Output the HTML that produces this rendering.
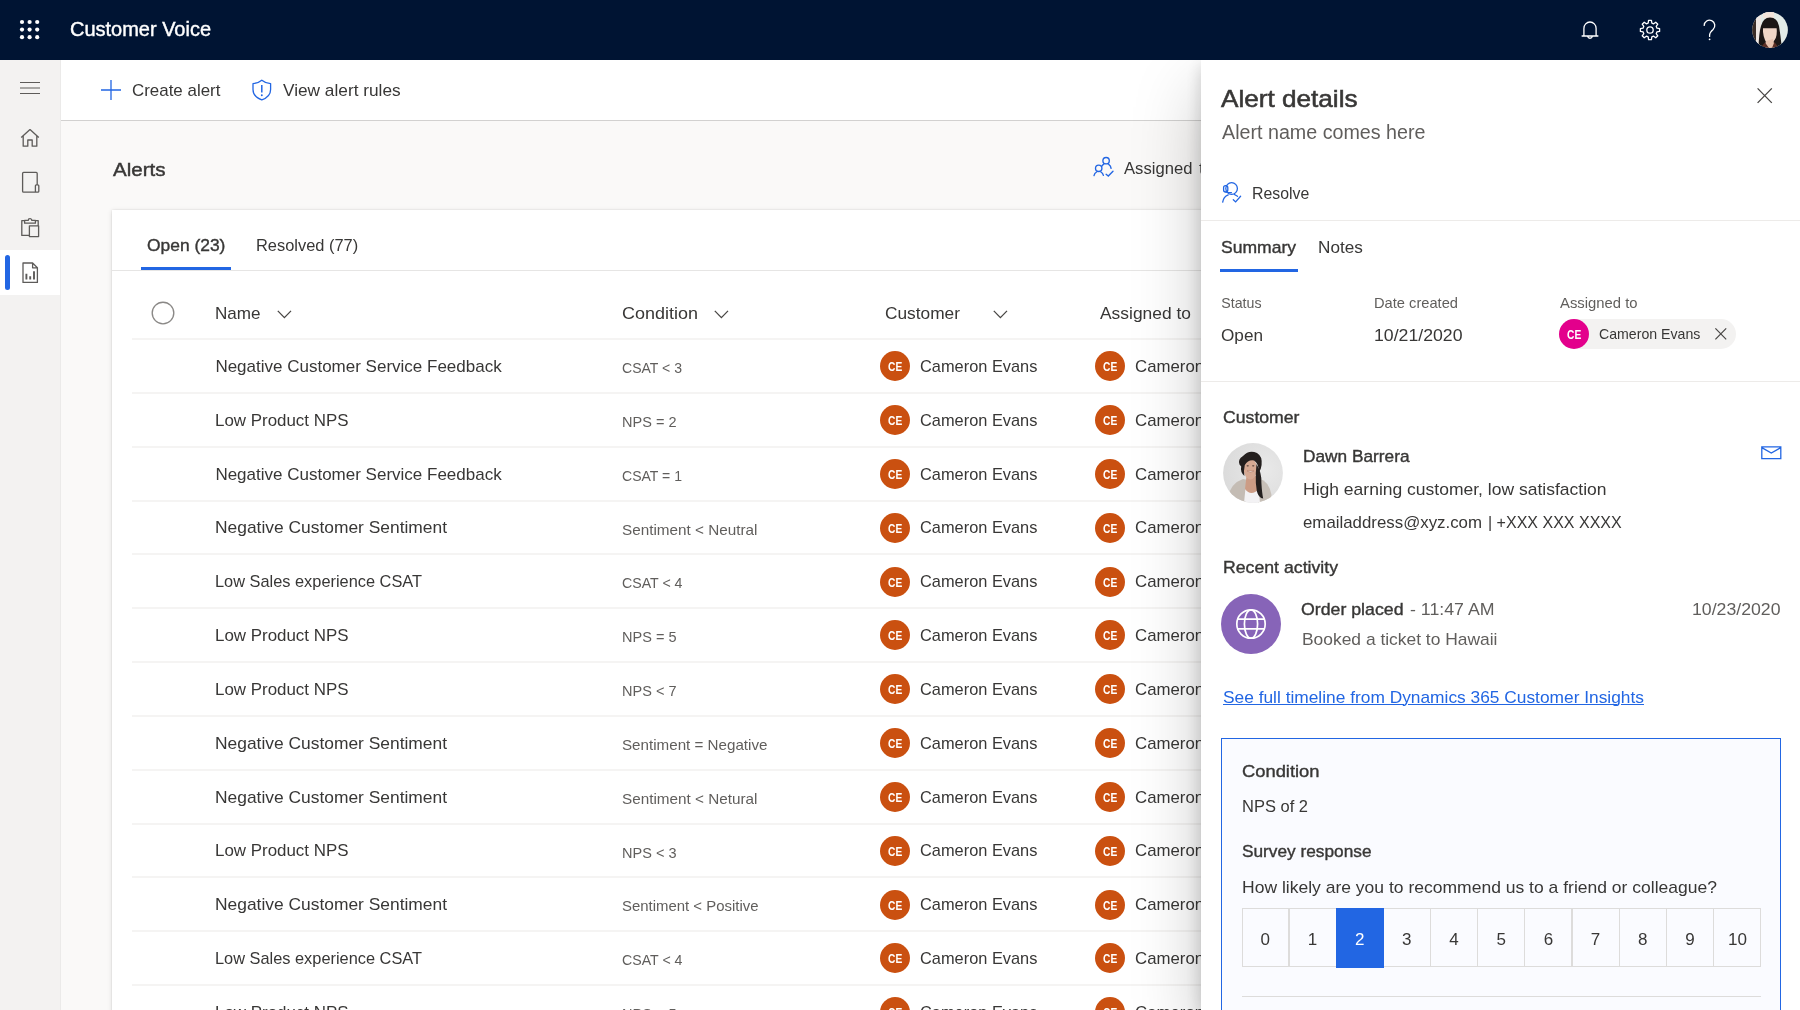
<!DOCTYPE html>
<html lang="en">
<head>
<meta charset="utf-8">
<title>Customer Voice - Alerts</title>
<style>
*{box-sizing:border-box;margin:0;padding:0}
html,body{width:1800px;height:1010px;overflow:hidden;background:#faf9f8;font-family:"Liberation Sans",sans-serif;color:#383736}
.t{position:absolute;white-space:pre;line-height:1;transform-origin:0 50%}
.a{position:absolute}
#root{position:absolute;left:0;top:0;width:1800px;height:1010px;overflow:hidden;will-change:transform}
#top{position:absolute;left:0;top:0;width:1800px;height:60px;background:#001433}
#side{position:absolute;left:0;top:60px;width:61px;height:950px;background:#f3f2f1;border-right:1px solid #ebeae9}
#sel{position:absolute;left:0;top:250px;width:60px;height:45px;background:#fff}
#selbar{position:absolute;left:5px;top:255px;width:5px;height:35px;border-radius:3px;background:#2266e3}
#cmd{position:absolute;left:61px;top:60px;width:1739px;height:61px;background:#fff;border-bottom:1px solid #d2d1d0}
#card{position:absolute;left:112px;top:210px;width:1700px;height:820px;background:#fff;box-shadow:0 1px 5px rgba(0,0,0,.13),0 0 2px rgba(0,0,0,.10)}
#tabline{position:absolute;left:112px;top:270px;width:1100px;height:1px;background:#e6e5e4}
#tabsel{position:absolute;left:141px;top:267px;width:90px;height:3px;background:#2266e3}
#panel{position:absolute;left:1201px;top:0;width:599px;height:950px;background:#fff;box-shadow:0 28.8px 64.8px rgba(0,0,0,.22),0 5.4px 16.2px rgba(0,0,0,.18)}
.sep{position:absolute;left:132px;width:1080px;height:2px;background:#f5f4f3}
.av{position:absolute;width:30px;height:30px;border-radius:50%;background:#ca5010}
.pl{position:absolute;left:1201px;width:599px;height:2px;background:#edebe9}
svg{position:absolute;overflow:visible}
</style>
</head>
<body><div id="root">
<div id="top"></div>
<svg width="60" height="60" style="left:0;top:0" fill="#fff"><circle cx="22.0" cy="22.0" r="2.1"/><circle cx="22.0" cy="29.6" r="2.1"/><circle cx="22.0" cy="37.2" r="2.1"/><circle cx="29.6" cy="22.0" r="2.1"/><circle cx="29.6" cy="29.6" r="2.1"/><circle cx="29.6" cy="37.2" r="2.1"/><circle cx="37.2" cy="22.0" r="2.1"/><circle cx="37.2" cy="29.6" r="2.1"/><circle cx="37.2" cy="37.2" r="2.1"/></svg>
<span class="t" style="left:70.40px;top:19.69px;font-size:19.5px;transform:scaleX(1.0243);color:#fff;-webkit-text-stroke:0.4px;">Customer Voice</span>
<svg width="240" height="60" style="left:1560px;top:0" fill="none" stroke="#fff" stroke-width="1.3" stroke-linejoin="round" stroke-linecap="round">
<path d="M23.9 36 V28.4 a6.1 6.4 0 0 1 12.2 0 V36 M22.1 36 H37.9 M27.6 36.4 a2.5 2.6 0 0 0 4.8 0"/>
<g transform="translate(90 30)"><circle r="3.2"/><path d="M6.97 -1.80 L9.59 -1.43 L9.59 1.43 L6.97 1.80 L6.20 3.65 L7.80 5.77 L5.77 7.80 L3.65 6.20 L1.80 6.97 L1.43 9.59 L-1.43 9.59 L-1.80 6.97 L-3.65 6.20 L-5.77 7.80 L-7.80 5.77 L-6.20 3.65 L-6.97 1.80 L-9.59 1.43 L-9.59 -1.43 L-6.97 -1.80 L-6.20 -3.65 L-7.80 -5.77 L-5.77 -7.80 L-3.65 -6.20 L-1.80 -6.97 L-1.43 -9.59 L1.43 -9.59 L1.80 -6.97 L3.65 -6.20 L5.77 -7.80 L7.80 -5.77 L6.20 -3.65z"/></g>
<path d="M144.2 25.4 a5.3 5.3 0 1 1 8.9 4 c-2.3 2 -3.5 3.2 -3.5 5.6 v1.4" stroke-width="1.3"/><circle cx="149.6" cy="39.3" r="0.9" fill="#fff" stroke="none"/>
</svg>
<svg width="36" height="36" style="left:1752px;top:12px" viewBox="0 0 36 36"><defs><clipPath id="c1"><circle cx="18" cy="18" r="17.9"/></clipPath></defs>
<g clip-path="url(#c1)"><rect width="36" height="36" fill="#e3ebe7"/>
<rect x="0" y="0" width="4" height="36" fill="#3a2c26"/><rect x="4" y="0" width="5" height="36" fill="#efe7e2"/><rect x="11" y="0" width="11" height="6" fill="#f3e4da"/>
<path d="M6.5 36 Q7 20 9 14 Q11 5.5 18 5.4 Q25.5 5.5 27 14 Q28.6 24 29.4 32 L24 36 Z" fill="#1b1615"/>
<path d="M11 15.5 H24.6 Q25.6 24 22.6 28 L20 31.6 H15 Q10.4 25 11 15.5 Z" fill="#efd5c6"/>
<path d="M14 29 L21 27 L23 36 H12 Z" fill="#e6c2ae"/>
<path d="M8 36 L13 30.4 L17 36 Z M20 36 L22.4 30 L27 36 Z" fill="#5b2f25"/>
<path d="M10.6 16.2 H25 V13 H10.6 Z" fill="#1b1615"/>
</g></svg>
<div id="side"></div><div id="sel"></div><div id="selbar"></div>
<svg width="60" height="260" style="left:0;top:60px" fill="none" stroke="#5d5b59" stroke-width="1.3" stroke-linejoin="round">
<path d="M20 22.5 H40 M20 28 H40 M20 33.5 H40" stroke-width="1.1"/>
<path d="M21.2 77.6 L30 69.6 L38.8 77.6 M23.2 76 V86.2 H27.8 V80 H32.2 V86.2 H36.8 V76"/>
<path d="M37.2 124.6 V113.4 a1 1 0 0 0 -1 -1 H23.6 a1 1 0 0 0 -1 1 V131.2 a1 1 0 0 0 1 1 H35.4 M35.4 125.8 a1 1 0 0 1 1 -1 h1.4 a1 1 0 0 1 1 1 v5.4 a1 1 0 0 1 -1 1 h-1.4 a1 1 0 0 1 -1 -1z"/>
<path d="M24.4 160.6 H21.8 V175.4 H29 M35.6 160.6 H38.2 V165.4 M24.6 163.2 V160.4 H28.2 a1.8 1.8 0 0 1 3.6 0 H35.4 V163.2 z M29.4 165.8 H38.6 V176.6 H29.4z"/>
<path d="M23 203 H32.6 L37.4 207.8 V222.4 H23z M32.6 203 V207.8 H37.4" />
<path d="M26.4 219.5 v-5.8 M30.2 219.5 v-3.2 M34 219.5 v-8.2" stroke-width="1.9" stroke-linejoin="miter"/>
</svg>
<div id="cmd"></div>
<svg width="400" height="60" style="left:60px;top:60px" fill="none" stroke="#2266e3" stroke-width="1.3">
<path d="M51 20 V40 M41 30 H61"/>
<path d="M201.8 20.2 C198.9 22.6 196.1 23.4 193 23.6 V29.5 C193 34.6 196.6 38 201.8 39.9 C207 38 210.6 34.6 210.6 29.5 V23.6 C207.5 23.4 204.7 22.6 201.8 20.2z" stroke-linejoin="round"/>
<path d="M201.8 25 V32.4" stroke-width="1.5"/><circle cx="201.8" cy="35.2" r="0.95" fill="#2266e3" stroke="none"/>
</svg>
<span class="t" style="left:131.80px;top:82.11px;font-size:17px;transform:scaleX(0.9952);">Create alert</span>
<span class="t" style="left:282.90px;top:82.11px;font-size:17px;transform:scaleX(1.0146);">View alert rules</span>
<span class="t" style="left:112.80px;top:160.45px;font-size:19.2px;transform:scaleX(1.0704);-webkit-text-stroke:0.45px;">Alerts</span>
<svg width="24" height="24" style="left:1091px;top:155px" fill="none" stroke="#2266e3" stroke-width="1.35" stroke-linecap="round">
<circle cx="15.1" cy="5.7" r="3.2"/><path d="M17.7 9.3 Q19.9 10.6 20.1 13.4 M12.5 9.3 Q11.3 10 10.8 11.2"/>
<circle cx="7.7" cy="13.3" r="3.2"/><path d="M3 20.6 C3.4 18.6 4.3 17.6 5.6 17 M9.9 17 C11.2 17.7 12 18.7 12.4 20.4"/>
<path d="M15.1 19.3 L17.3 21 L22 16.3"/></svg>
<span class="t" style="left:1124.10px;top:159.61px;font-size:17px;transform:scaleX(0.9780);">Assigned</span>
<span class="t" style="left:1198.60px;top:159.61px;font-size:17px;transform:scaleX(1.0580);">to me</span>
<div id="card"></div><div id="tabline"></div><div id="tabsel"></div>
<span class="t" style="left:146.80px;top:236.71px;font-size:17px;transform:scaleX(1.0242);-webkit-text-stroke:0.38px;">Open (23)</span>
<span class="t" style="left:256.20px;top:236.71px;font-size:17px;transform:scaleX(0.9657);">Resolved (77)</span>
<svg width="26" height="26" style="left:149.5px;top:299.5px" fill="none" stroke="#8a8886" stroke-width="1.35"><circle cx="13" cy="13" r="10.8"/></svg>
<span class="t" style="left:215.40px;top:304.61px;font-size:17px;transform:scaleX(1.0053);">Name</span>
<span class="t" style="left:622.20px;top:304.61px;font-size:17px;transform:scaleX(1.0581);">Condition</span>
<span class="t" style="left:884.80px;top:304.61px;font-size:17px;transform:scaleX(1.0178);">Customer</span>
<span class="t" style="left:1100.00px;top:304.61px;font-size:17px;transform:scaleX(1.0243);">Assigned to</span>
<svg width="16" height="10" style="left:276.5px;top:309.5px" fill="none" stroke="#484644" stroke-width="1.3"><path d="M0.8 0.9 L7.4 7.6 L14 0.9"/></svg>
<svg width="16" height="10" style="left:713.5px;top:309.5px" fill="none" stroke="#484644" stroke-width="1.3"><path d="M0.8 0.9 L7.4 7.6 L14 0.9"/></svg>
<svg width="16" height="10" style="left:992.5px;top:309.5px" fill="none" stroke="#484644" stroke-width="1.3"><path d="M0.8 0.9 L7.4 7.6 L14 0.9"/></svg>
<div class="sep" style="top:338.0px"></div>
<span class="t" style="left:215.40px;top:357.91px;font-size:17px;">Negative Customer Service Feedback</span>
<span class="t" style="left:622.30px;top:361.04px;font-size:14.6px;transform:scaleX(0.9626);color:#605e5c;">CSAT &lt; 3</span>
<div class="av" style="left:880px;top:351.2px"></div>
<span class="t" style="left:888.00px;top:361.24px;font-size:12px;transform:scaleX(0.8517);color:#fff;font-weight:bold;">CE</span>
<span class="t" style="left:920.40px;top:357.91px;font-size:17px;transform:scaleX(0.9632);">Cameron Evans</span>
<div class="av" style="left:1095px;top:351.2px"></div>
<span class="t" style="left:1103.00px;top:361.24px;font-size:12px;transform:scaleX(0.8517);color:#fff;font-weight:bold;">CE</span>
<span class="t" style="left:1135.40px;top:357.91px;font-size:17px;transform:scaleX(0.9886);">Cameron Evans</span>
<div class="sep" style="top:391.8px"></div>
<span class="t" style="left:215.40px;top:411.74px;font-size:17px;transform:scaleX(0.9949);">Low Product NPS</span>
<span class="t" style="left:622.30px;top:414.87px;font-size:14.6px;transform:scaleX(0.9951);color:#605e5c;">NPS = 2</span>
<div class="av" style="left:880px;top:405.0px"></div>
<span class="t" style="left:888.00px;top:415.07px;font-size:12px;transform:scaleX(0.8517);color:#fff;font-weight:bold;">CE</span>
<span class="t" style="left:920.40px;top:411.74px;font-size:17px;transform:scaleX(0.9632);">Cameron Evans</span>
<div class="av" style="left:1095px;top:405.0px"></div>
<span class="t" style="left:1103.00px;top:415.07px;font-size:12px;transform:scaleX(0.8517);color:#fff;font-weight:bold;">CE</span>
<span class="t" style="left:1135.40px;top:411.74px;font-size:17px;transform:scaleX(0.9886);">Cameron Evans</span>
<div class="sep" style="top:445.7px"></div>
<span class="t" style="left:215.40px;top:465.57px;font-size:17px;">Negative Customer Service Feedback</span>
<span class="t" style="left:622.30px;top:468.70px;font-size:14.6px;transform:scaleX(0.9626);color:#605e5c;">CSAT = 1</span>
<div class="av" style="left:880px;top:458.9px"></div>
<span class="t" style="left:888.00px;top:468.90px;font-size:12px;transform:scaleX(0.8517);color:#fff;font-weight:bold;">CE</span>
<span class="t" style="left:920.40px;top:465.57px;font-size:17px;transform:scaleX(0.9632);">Cameron Evans</span>
<div class="av" style="left:1095px;top:458.9px"></div>
<span class="t" style="left:1103.00px;top:468.90px;font-size:12px;transform:scaleX(0.8517);color:#fff;font-weight:bold;">CE</span>
<span class="t" style="left:1135.40px;top:465.57px;font-size:17px;transform:scaleX(0.9886);">Cameron Evans</span>
<div class="sep" style="top:499.5px"></div>
<span class="t" style="left:215.40px;top:519.40px;font-size:17px;transform:scaleX(1.0230);">Negative Customer Sentiment</span>
<span class="t" style="left:622.30px;top:522.53px;font-size:14.6px;transform:scaleX(1.0472);color:#605e5c;">Sentiment &lt; Neutral</span>
<div class="av" style="left:880px;top:512.7px"></div>
<span class="t" style="left:888.00px;top:522.73px;font-size:12px;transform:scaleX(0.8517);color:#fff;font-weight:bold;">CE</span>
<span class="t" style="left:920.40px;top:519.40px;font-size:17px;transform:scaleX(0.9632);">Cameron Evans</span>
<div class="av" style="left:1095px;top:512.7px"></div>
<span class="t" style="left:1103.00px;top:522.73px;font-size:12px;transform:scaleX(0.8517);color:#fff;font-weight:bold;">CE</span>
<span class="t" style="left:1135.40px;top:519.40px;font-size:17px;transform:scaleX(0.9886);">Cameron Evans</span>
<div class="sep" style="top:553.3px"></div>
<span class="t" style="left:215.40px;top:573.23px;font-size:17px;transform:scaleX(0.9622);">Low Sales experience CSAT</span>
<span class="t" style="left:622.30px;top:576.36px;font-size:14.6px;transform:scaleX(0.9707);color:#605e5c;">CSAT &lt; 4</span>
<div class="av" style="left:880px;top:566.5px"></div>
<span class="t" style="left:888.00px;top:576.56px;font-size:12px;transform:scaleX(0.8517);color:#fff;font-weight:bold;">CE</span>
<span class="t" style="left:920.40px;top:573.23px;font-size:17px;transform:scaleX(0.9632);">Cameron Evans</span>
<div class="av" style="left:1095px;top:566.5px"></div>
<span class="t" style="left:1103.00px;top:576.56px;font-size:12px;transform:scaleX(0.8517);color:#fff;font-weight:bold;">CE</span>
<span class="t" style="left:1135.40px;top:573.23px;font-size:17px;transform:scaleX(0.9886);">Cameron Evans</span>
<div class="sep" style="top:607.1px"></div>
<span class="t" style="left:215.40px;top:627.06px;font-size:17px;transform:scaleX(0.9949);">Low Product NPS</span>
<span class="t" style="left:622.30px;top:630.19px;font-size:14.6px;transform:scaleX(0.9951);color:#605e5c;">NPS = 5</span>
<div class="av" style="left:880px;top:620.4px"></div>
<span class="t" style="left:888.00px;top:630.39px;font-size:12px;transform:scaleX(0.8517);color:#fff;font-weight:bold;">CE</span>
<span class="t" style="left:920.40px;top:627.06px;font-size:17px;transform:scaleX(0.9632);">Cameron Evans</span>
<div class="av" style="left:1095px;top:620.4px"></div>
<span class="t" style="left:1103.00px;top:630.39px;font-size:12px;transform:scaleX(0.8517);color:#fff;font-weight:bold;">CE</span>
<span class="t" style="left:1135.40px;top:627.06px;font-size:17px;transform:scaleX(0.9886);">Cameron Evans</span>
<div class="sep" style="top:661.0px"></div>
<span class="t" style="left:215.40px;top:680.89px;font-size:17px;transform:scaleX(0.9949);">Low Product NPS</span>
<span class="t" style="left:622.30px;top:684.02px;font-size:14.6px;transform:scaleX(0.9951);color:#605e5c;">NPS &lt; 7</span>
<div class="av" style="left:880px;top:674.2px"></div>
<span class="t" style="left:888.00px;top:684.22px;font-size:12px;transform:scaleX(0.8517);color:#fff;font-weight:bold;">CE</span>
<span class="t" style="left:920.40px;top:680.89px;font-size:17px;transform:scaleX(0.9632);">Cameron Evans</span>
<div class="av" style="left:1095px;top:674.2px"></div>
<span class="t" style="left:1103.00px;top:684.22px;font-size:12px;transform:scaleX(0.8517);color:#fff;font-weight:bold;">CE</span>
<span class="t" style="left:1135.40px;top:680.89px;font-size:17px;transform:scaleX(0.9886);">Cameron Evans</span>
<div class="sep" style="top:714.8px"></div>
<span class="t" style="left:215.40px;top:734.72px;font-size:17px;transform:scaleX(1.0230);">Negative Customer Sentiment</span>
<span class="t" style="left:622.30px;top:737.85px;font-size:14.6px;transform:scaleX(1.0396);color:#605e5c;">Sentiment = Negative</span>
<div class="av" style="left:880px;top:728.0px"></div>
<span class="t" style="left:888.00px;top:738.05px;font-size:12px;transform:scaleX(0.8517);color:#fff;font-weight:bold;">CE</span>
<span class="t" style="left:920.40px;top:734.72px;font-size:17px;transform:scaleX(0.9632);">Cameron Evans</span>
<div class="av" style="left:1095px;top:728.0px"></div>
<span class="t" style="left:1103.00px;top:738.05px;font-size:12px;transform:scaleX(0.8517);color:#fff;font-weight:bold;">CE</span>
<span class="t" style="left:1135.40px;top:734.72px;font-size:17px;transform:scaleX(0.9886);">Cameron Evans</span>
<div class="sep" style="top:768.6px"></div>
<span class="t" style="left:215.40px;top:788.55px;font-size:17px;transform:scaleX(1.0230);">Negative Customer Sentiment</span>
<span class="t" style="left:622.30px;top:791.68px;font-size:14.6px;transform:scaleX(1.0472);color:#605e5c;">Sentiment &lt; Netural</span>
<div class="av" style="left:880px;top:781.8px"></div>
<span class="t" style="left:888.00px;top:791.88px;font-size:12px;transform:scaleX(0.8517);color:#fff;font-weight:bold;">CE</span>
<span class="t" style="left:920.40px;top:788.55px;font-size:17px;transform:scaleX(0.9632);">Cameron Evans</span>
<div class="av" style="left:1095px;top:781.8px"></div>
<span class="t" style="left:1103.00px;top:791.88px;font-size:12px;transform:scaleX(0.8517);color:#fff;font-weight:bold;">CE</span>
<span class="t" style="left:1135.40px;top:788.55px;font-size:17px;transform:scaleX(0.9886);">Cameron Evans</span>
<div class="sep" style="top:822.5px"></div>
<span class="t" style="left:215.40px;top:842.38px;font-size:17px;transform:scaleX(0.9949);">Low Product NPS</span>
<span class="t" style="left:622.30px;top:845.51px;font-size:14.6px;transform:scaleX(0.9951);color:#605e5c;">NPS &lt; 3</span>
<div class="av" style="left:880px;top:835.7px"></div>
<span class="t" style="left:888.00px;top:845.71px;font-size:12px;transform:scaleX(0.8517);color:#fff;font-weight:bold;">CE</span>
<span class="t" style="left:920.40px;top:842.38px;font-size:17px;transform:scaleX(0.9632);">Cameron Evans</span>
<div class="av" style="left:1095px;top:835.7px"></div>
<span class="t" style="left:1103.00px;top:845.71px;font-size:12px;transform:scaleX(0.8517);color:#fff;font-weight:bold;">CE</span>
<span class="t" style="left:1135.40px;top:842.38px;font-size:17px;transform:scaleX(0.9886);">Cameron Evans</span>
<div class="sep" style="top:876.3px"></div>
<span class="t" style="left:215.40px;top:896.21px;font-size:17px;transform:scaleX(1.0230);">Negative Customer Sentiment</span>
<span class="t" style="left:622.30px;top:899.34px;font-size:14.6px;transform:scaleX(1.0228);color:#605e5c;">Sentiment &lt; Positive</span>
<div class="av" style="left:880px;top:889.5px"></div>
<span class="t" style="left:888.00px;top:899.54px;font-size:12px;transform:scaleX(0.8517);color:#fff;font-weight:bold;">CE</span>
<span class="t" style="left:920.40px;top:896.21px;font-size:17px;transform:scaleX(0.9632);">Cameron Evans</span>
<div class="av" style="left:1095px;top:889.5px"></div>
<span class="t" style="left:1103.00px;top:899.54px;font-size:12px;transform:scaleX(0.8517);color:#fff;font-weight:bold;">CE</span>
<span class="t" style="left:1135.40px;top:896.21px;font-size:17px;transform:scaleX(0.9886);">Cameron Evans</span>
<div class="sep" style="top:930.1px"></div>
<span class="t" style="left:215.40px;top:950.04px;font-size:17px;transform:scaleX(0.9622);">Low Sales experience CSAT</span>
<span class="t" style="left:622.30px;top:953.17px;font-size:14.6px;transform:scaleX(0.9707);color:#605e5c;">CSAT &lt; 4</span>
<div class="av" style="left:880px;top:943.3px"></div>
<span class="t" style="left:888.00px;top:953.37px;font-size:12px;transform:scaleX(0.8517);color:#fff;font-weight:bold;">CE</span>
<span class="t" style="left:920.40px;top:950.04px;font-size:17px;transform:scaleX(0.9632);">Cameron Evans</span>
<div class="av" style="left:1095px;top:943.3px"></div>
<span class="t" style="left:1103.00px;top:953.37px;font-size:12px;transform:scaleX(0.8517);color:#fff;font-weight:bold;">CE</span>
<span class="t" style="left:1135.40px;top:950.04px;font-size:17px;transform:scaleX(0.9886);">Cameron Evans</span>
<div class="sep" style="top:984.0px"></div>
<span class="t" style="left:215.40px;top:1003.87px;font-size:17px;transform:scaleX(0.9949);">Low Product NPS</span>
<span class="t" style="left:622.30px;top:1007.00px;font-size:14.6px;transform:scaleX(0.9951);color:#605e5c;">NPS = 5</span>
<div class="av" style="left:880px;top:997.2px"></div>
<span class="t" style="left:888.00px;top:1007.20px;font-size:12px;transform:scaleX(0.8517);color:#fff;font-weight:bold;">CE</span>
<span class="t" style="left:920.40px;top:1003.87px;font-size:17px;transform:scaleX(0.9632);">Cameron Evans</span>
<div class="av" style="left:1095px;top:997.2px"></div>
<span class="t" style="left:1103.00px;top:1007.20px;font-size:12px;transform:scaleX(0.8517);color:#fff;font-weight:bold;">CE</span>
<span class="t" style="left:1135.40px;top:1003.87px;font-size:17px;transform:scaleX(0.9886);">Cameron Evans</span>
<div class="a" style="left:0;top:60px;width:1800px;height:950px;overflow:hidden"><div id="panel"></div></div>
<span class="t" style="left:1221.30px;top:87.48px;font-size:24px;transform:scaleX(1.0886);-webkit-text-stroke:0.55px;">Alert details</span>
<span class="t" style="left:1221.50px;top:122.79px;font-size:19.5px;transform:scaleX(1.0095);color:#605e5c;">Alert name comes here</span>
<svg width="18" height="18" style="left:1756px;top:86.5px" fill="none" stroke="#484644" stroke-width="1.3"><path d="M1.6 1.4 L15.8 15.9 M15.8 1.4 L1.6 15.9"/></svg>
<svg width="24" height="24" style="left:1220px;top:181px" fill="none" stroke="#2266e3" stroke-width="1.3" stroke-linecap="round">
<circle cx="11.6" cy="7.5" r="5.8"/><rect x="3.6" y="4.6" width="4.2" height="6.4" rx="2"/><path d="M6 11 q1.4 1 5.4 0.6"/>
<path d="M2.7 21.2 C3.2 17.4 5 15.2 8.2 13.9 M14.4 13.5 L17.5 15.3"/>
<path d="M13.3 18.8 l2.3 2.1 l5 -5.6"/></svg>
<span class="t" style="left:1252.20px;top:184.81px;font-size:17px;transform:scaleX(0.9329);">Resolve</span>
<div class="pl" style="top:220.2px;height:1.2px"></div>
<span class="t" style="left:1221.20px;top:238.81px;font-size:17px;transform:scaleX(1.0311);-webkit-text-stroke:0.38px;">Summary</span>
<span class="t" style="left:1317.60px;top:238.81px;font-size:17px;transform:scaleX(1.0085);">Notes</span>
<div class="a" style="left:1220px;top:269px;width:77.5px;height:2.8px;background:#2266e3"></div>
<span class="t" style="left:1221.30px;top:295.88px;font-size:14.2px;color:#605e5c;">Status</span>
<span class="t" style="left:1374.00px;top:295.88px;font-size:14.2px;transform:scaleX(1.0340);color:#605e5c;">Date created</span>
<span class="t" style="left:1560.00px;top:295.88px;font-size:14.2px;transform:scaleX(1.0453);color:#605e5c;">Assigned to</span>
<span class="t" style="left:1221.30px;top:327.01px;font-size:17px;transform:scaleX(1.0098);">Open</span>
<span class="t" style="left:1374.30px;top:327.01px;font-size:17px;transform:scaleX(1.0400);">10/21/2020</span>
<div class="a" style="left:1558.5px;top:319px;width:177.5px;height:30px;border-radius:15px;background:#f3f2f1"></div>
<div class="a" style="left:1558.5px;top:319px;width:30px;height:30px;border-radius:50%;background:#e3008c"></div>
<span class="t" style="left:1566.50px;top:328.84px;font-size:12px;transform:scaleX(0.8517);color:#fff;font-weight:bold;">CE</span>
<span class="t" style="left:1598.80px;top:325.70px;font-size:15px;transform:scaleX(0.9427);">Cameron Evans</span>
<svg width="14" height="14" style="left:1714px;top:327px" fill="none" stroke="#484644" stroke-width="1.2"><path d="M1.4 1.4 L12.2 12.4 M12.2 1.4 L1.4 12.4"/></svg>
<div class="pl" style="top:380.6px;height:1.3px"></div>
<span class="t" style="left:1222.50px;top:408.71px;font-size:17px;transform:scaleX(1.0382);-webkit-text-stroke:0.38px;">Customer</span>
<svg width="60" height="60" style="left:1222.6px;top:442.6px" viewBox="0 0 60 60"><defs><clipPath id="c2"><circle cx="30" cy="30" r="29.9"/></clipPath>
<radialGradient id="g2" cx="0.7" cy="0.45" r="0.8"><stop offset="0" stop-color="#e9e9e9"/><stop offset="1" stop-color="#d9d9d9"/></radialGradient></defs>
<g clip-path="url(#c2)"><rect width="60" height="60" fill="url(#g2)"/>
<path d="M5 54 Q8 40 20 36 L25 37 L24 60 L8 60 Z" fill="#c4bcb4"/>
<path d="M36 35.5 Q46 38 48.5 52 L47 60 L35 60 Z" fill="#c8c0b8"/>
<path d="M22.5 45 Q28 53 35.5 45 L37 60 L21 60 Z" fill="#f3f2f4"/>
<path d="M23.5 33 L34 33 L36 46 Q28 54 22 46 Z" fill="#cc9c85"/>
<ellipse cx="27.4" cy="26" rx="6.7" ry="10.4" fill="#d6a993"/>
<path d="M16.5 21.5 Q14.5 16 20 13 Q26 6.5 34 10 Q39.5 13 38.6 22 Q38 27 36 29 Q35.5 20 31 17.4 Q25 16.4 21.8 22 Q20.4 28 21.4 33 Q17 29 18.2 23.5 Z" fill="#241f1e"/>
<path d="M33.5 21 Q39 30 38.4 40 Q39 50 40.2 55.6 Q35.5 55 33.8 48 Q32.4 40 32.8 30 Z" fill="#241f1e"/>
<ellipse cx="24.7" cy="22.8" rx="1.2" ry="0.65" fill="#4a3833"/><ellipse cx="30.2" cy="22.8" rx="1.2" ry="0.65" fill="#4a3833"/>
<path d="M24 28 q3.5 2.6 7 0z" fill="#f3e9e4" stroke="#a9705e" stroke-width="0.5"/>
</g></svg>
<span class="t" style="left:1303.00px;top:448.41px;font-size:17px;transform:scaleX(1.0155);-webkit-text-stroke:0.38px;">Dawn Barrera</span>
<span class="t" style="left:1303.00px;top:480.81px;font-size:17px;transform:scaleX(1.0295);">High earning customer, low satisfaction</span>
<span class="t" style="left:1303.00px;top:513.81px;font-size:17px;transform:scaleX(0.9906);">emailaddress@xyz.com</span>
<span class="t" style="left:1488.30px;top:513.81px;font-size:17px;transform:scaleX(0.9422);">| +XXX XXX XXXX</span>
<svg width="22" height="14" style="left:1760.5px;top:445.5px" fill="none" stroke="#2266e3" stroke-width="1.3"><path d="M0.8 0.8 H19.8 V12.6 H0.8z M0.8 1.6 L10.3 7 L19.8 1.6"/></svg>
<span class="t" style="left:1222.50px;top:558.51px;font-size:17px;transform:scaleX(1.0403);-webkit-text-stroke:0.38px;">Recent activity</span>
<div class="a" style="left:1221px;top:594px;width:60px;height:60px;border-radius:50%;background:#8764b8"></div>
<svg width="32" height="32" style="left:1235px;top:608px" fill="none" stroke="#fff" stroke-width="1.7"><circle cx="16" cy="16" r="14.2"/><ellipse cx="16" cy="16" rx="6.6" ry="14.2"/><path d="M2.6 11.2 H29.4 M2.6 20.8 H29.4"/></svg>
<span class="t" style="left:1301.30px;top:600.81px;font-size:17px;transform:scaleX(1.0429);-webkit-text-stroke:0.38px;">Order placed</span>
<span class="t" style="left:1409.60px;top:600.81px;font-size:17px;transform:scaleX(1.0438);color:#605e5c;">- 11:47 AM</span>
<span class="t" style="left:1691.50px;top:600.81px;font-size:17px;transform:scaleX(1.0400);color:#605e5c;">10/23/2020</span>
<span class="t" style="left:1301.50px;top:631.21px;font-size:17px;transform:scaleX(1.0241);color:#605e5c;">Booked a ticket to Hawaii</span>
<span class="t" style="left:1222.50px;top:688.51px;font-size:17px;transform:scaleX(1.0196);color:#2266e3;text-decoration:underline;text-decoration-thickness:1.2px;text-underline-offset:1.4px;">See full timeline from Dynamics 365 Customer Insights</span>
<div class="a" style="left:1221.3px;top:738px;width:559.7px;height:300px;background:#fafbff;border:1.5px solid #2266e3"></div>
<span class="t" style="left:1241.50px;top:763.41px;font-size:17px;transform:scaleX(1.0790);-webkit-text-stroke:0.38px;">Condition</span>
<span class="t" style="left:1241.50px;top:798.41px;font-size:17px;transform:scaleX(0.9699);">NPS of 2</span>
<span class="t" style="left:1241.50px;top:843.41px;font-size:17px;transform:scaleX(1.0151);-webkit-text-stroke:0.38px;">Survey response</span>
<span class="t" style="left:1241.50px;top:878.51px;font-size:17px;transform:scaleX(1.0301);">How likely are you to recommend us to a friend or colleague?</span>
<div class="a" style="left:1241.7px;top:908.3px;width:519.0px;height:59.0px;border:1.3px solid #dddcdb;background:#fafbff"></div>
<span class="t" style="left:1260.56px;top:930.81px;font-size:17px;">0</span>
<div class="a" style="left:1288.3px;top:908.3px;width:1.3px;height:59.0px;background:#dddcdb"></div>
<span class="t" style="left:1307.74px;top:930.81px;font-size:17px;">1</span>
<div class="a" style="left:1335.8px;top:907.9px;width:47.8px;height:59.8px;background:#2266e3"></div>
<span class="t" style="left:1354.92px;top:930.81px;font-size:17px;color:#fff;">2</span>
<span class="t" style="left:1402.10px;top:930.81px;font-size:17px;">3</span>
<div class="a" style="left:1429.8px;top:908.3px;width:1.3px;height:59.0px;background:#dddcdb"></div>
<span class="t" style="left:1449.28px;top:930.81px;font-size:17px;">4</span>
<div class="a" style="left:1477.0px;top:908.3px;width:1.3px;height:59.0px;background:#dddcdb"></div>
<span class="t" style="left:1496.47px;top:930.81px;font-size:17px;">5</span>
<div class="a" style="left:1524.2px;top:908.3px;width:1.3px;height:59.0px;background:#dddcdb"></div>
<span class="t" style="left:1543.65px;top:930.81px;font-size:17px;">6</span>
<div class="a" style="left:1571.4px;top:908.3px;width:1.3px;height:59.0px;background:#dddcdb"></div>
<span class="t" style="left:1590.83px;top:930.81px;font-size:17px;">7</span>
<div class="a" style="left:1618.6px;top:908.3px;width:1.3px;height:59.0px;background:#dddcdb"></div>
<span class="t" style="left:1638.01px;top:930.81px;font-size:17px;">8</span>
<div class="a" style="left:1665.7px;top:908.3px;width:1.3px;height:59.0px;background:#dddcdb"></div>
<span class="t" style="left:1685.19px;top:930.81px;font-size:17px;">9</span>
<div class="a" style="left:1712.9px;top:908.3px;width:1.3px;height:59.0px;background:#dddcdb"></div>
<span class="t" style="left:1727.61px;top:930.81px;font-size:17px;transform:scaleX(1.0041);">10</span>
<div class="a" style="left:1241.5px;top:996px;width:519.5px;height:1.4px;background:#dddcdb"></div>
</div></body>
</html>
